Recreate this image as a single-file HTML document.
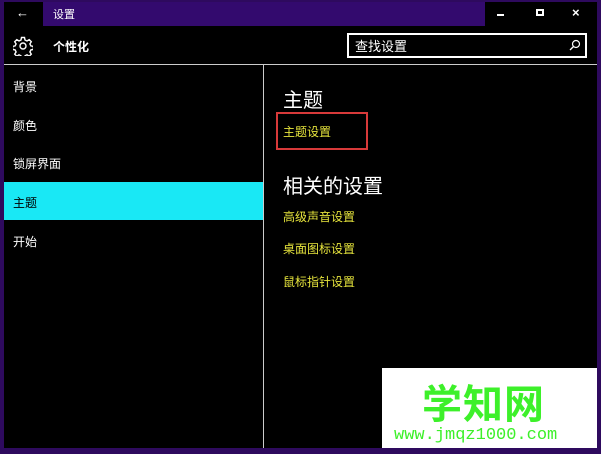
<!DOCTYPE html>
<html><head><meta charset="utf-8"><style>
*{margin:0;padding:0;box-sizing:border-box}
body{width:601px;height:454px;background:#2e0a5e;position:relative;overflow:hidden;font-family:"Liberation Sans","Noto Sans CJK SC",sans-serif;color:#fff}
.a{position:absolute}
.t{font-size:12px;white-space:nowrap}
.y{color:#e6e43c}
</style></head><body>
<div class="a" style="left:4px;top:2px;width:593px;height:446px;background:#000"></div>
<div class="a" style="left:43px;top:2px;width:442px;height:24px;background:#330a6e"></div>
<div class="a t" style="left:16px;top:5px;font-size:13px">←</div>
<div class="a t" style="left:53px;top:6px;font-size:11px">设置</div>
<div class="a" style="left:497px;top:14px;width:7px;height:2px;background:#fff"></div>
<div class="a" style="left:536px;top:9px;width:8px;height:7px;border:2px solid #fff"></div>
<div class="a t" style="left:572px;top:5px;font-size:13px;font-weight:bold">×</div>
<svg class="a" style="left:13px;top:36px" width="20" height="20" viewBox="0 0 20 20"><g fill="none" stroke="#fff" stroke-width="1.4"><circle cx="10" cy="10" r="3"/><path d="M8.5 1.5h3l.5 2.5 2 1 2.2-1.4 2.1 2.1-1.4 2.2 1 2 2.5.5v3l-2.5.5-1 2 1.4 2.2-2.1 2.1-2.2-1.4-2 1-.5 2.5h-3l-.5-2.5-2-1-2.2 1.4-2.1-2.1 1.4-2.2-1-2-2.5-.5v-3l2.5-.5 1-2-1.4-2.2 2.1-2.1 2.2 1.4 2-1z"/></g></svg>
<div class="a t" style="left:53px;top:38px;font-weight:bold">个性化</div>
<div class="a" style="left:347px;top:33px;width:240px;height:25px;border:2px solid #fff"></div>
<div class="a t" style="left:355px;top:36px;font-size:13px">查找设置</div>
<svg class="a" style="left:569px;top:39px" width="12" height="12"><circle cx="7" cy="5" r="3.5" fill="none" stroke="#fff" stroke-width="1.2"/><path d="M4.5 7.5L1 11" stroke="#fff" stroke-width="1.3"/></svg>
<div class="a" style="left:4px;top:64px;width:593px;height:1px;background:#ccc"></div>
<div class="a" style="left:263px;top:65px;width:1px;height:383px;background:#ccc"></div>
<div class="a" style="left:4px;top:182px;width:259px;height:38px;background:#19e8f5"></div>
<div class="a t" style="left:13px;top:78px">背景</div>
<div class="a t" style="left:13px;top:117px">颜色</div>
<div class="a t" style="left:13px;top:155px">锁屏界面</div>
<div class="a t" style="left:13px;top:194px;color:#000">主题</div>
<div class="a t" style="left:13px;top:233px">开始</div>
<div class="a t" style="left:283px;top:84px;font-size:20px">主题</div>
<div class="a" style="left:276px;top:112px;width:92px;height:38px;border:2px solid #d83a3a"></div>
<div class="a t y" style="left:283px;top:123px">主题设置</div>
<div class="a t" style="left:283px;top:170px;font-size:20px">相关的设置</div>
<div class="a t y" style="left:283px;top:208px">高级声音设置</div>
<div class="a t y" style="left:283px;top:240px">桌面图标设置</div>
<div class="a t y" style="left:283px;top:273px">鼠标指针设置</div>
<div class="a" style="left:382px;top:368px;width:215px;height:80px;background:#fff"></div>
<div class="a t" style="left:422px;top:372px;font-size:40px;font-weight:bold;color:#3df02a;letter-spacing:1px">学知网</div>
<div class="a t" style="left:394px;top:426px;font-size:17px;font-family:'Liberation Mono',monospace;color:#3df02a">www.jmqz1000.com</div>
</body></html>
